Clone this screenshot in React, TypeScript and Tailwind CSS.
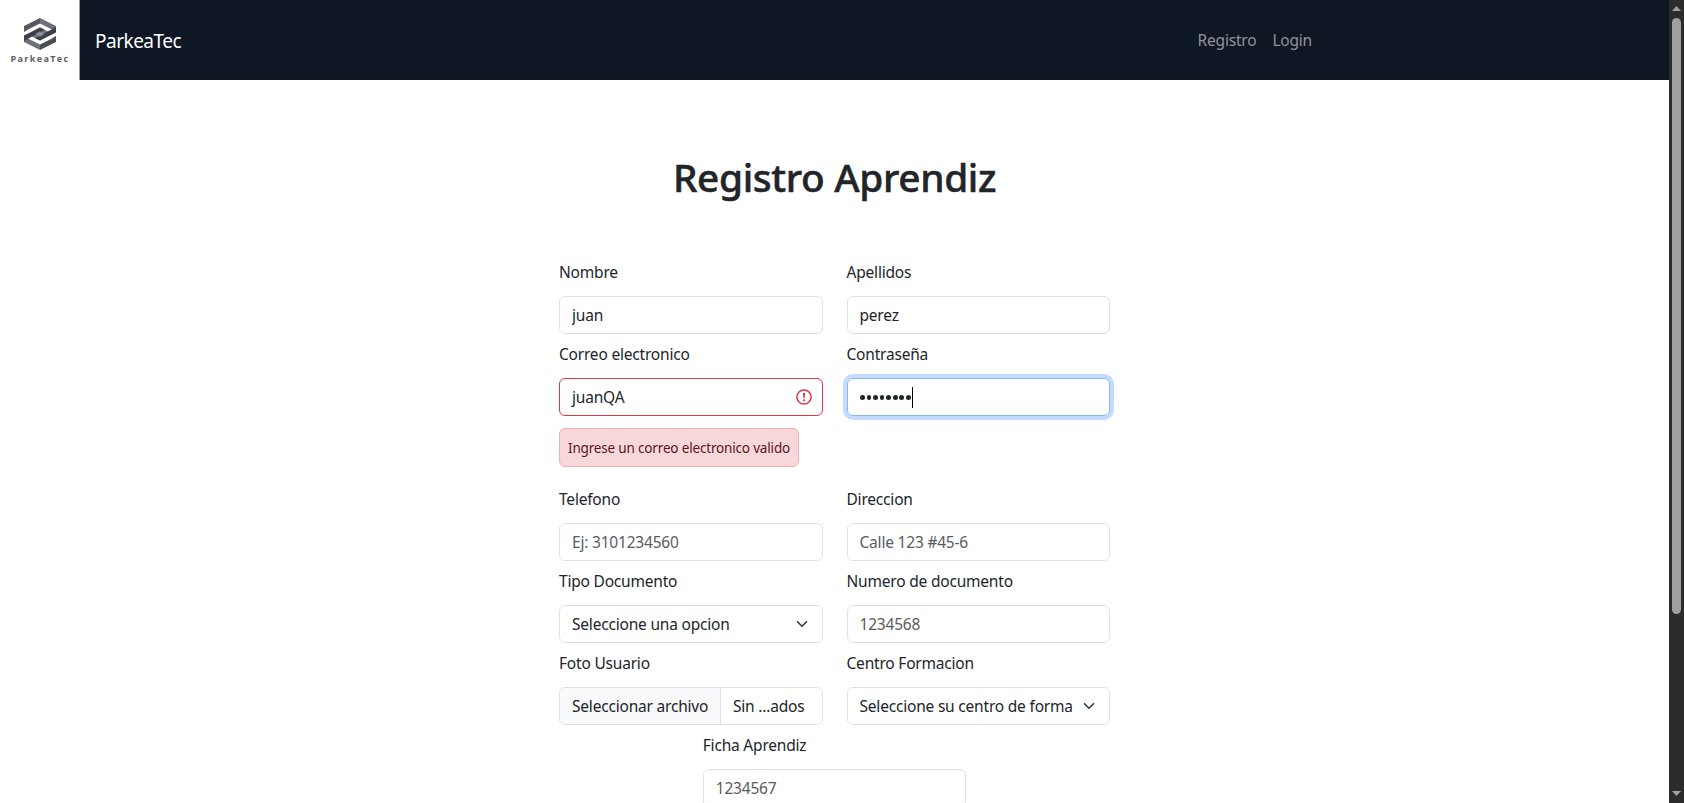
import type { ReactNode } from "react";

const box =
  "flex h-[38px] w-full items-center rounded-[6px] border border-[#dee2e6] bg-white px-3 whitespace-nowrap";

function Field({ label, children }: { label: string; children: ReactNode }) {
  return (
    <div className="flex flex-col">
      <label className="mt-2 h-6 leading-6">{label}</label>
      <div className="mt-3">{children}</div>
    </div>
  );
}

function Input({ value, placeholder }: { value?: string; placeholder?: string }) {
  return (
    <input
      className="h-[38px] w-full rounded-[6px] border border-[#dee2e6] bg-white px-3 outline-none placeholder:text-[#595c5f]"
      defaultValue={value}
      placeholder={placeholder}
    />
  );
}

function Chevron() {
  return (
    <svg className="mr-0.5 size-3 shrink-0" viewBox="0 0 16 16" fill="none" stroke="#343a40" strokeWidth="2.200" strokeLinecap="round" strokeLinejoin="round">
      <path d="m2 5 6 6 6-6" />
    </svg>
  );
}

function Logo() {
  return (
    <div className="flex h-20 w-20 shrink-0 flex-col items-center border-r border-[#9a9da3] bg-white pt-[18px]">
      <svg className="h-8 w-8" viewBox="0 0 32 32">
        <path d="M0 8 16 0v5.500L5 11 0 14z" fill="#565962" />
        <path d="M16 0 32 8v6l-5-3L16 5.500z" fill="#6e7179" />
        <path d="M0 24 16 32v-5.500L5 21 0 18z" fill="#6e7179" />
        <path d="M16 32 32 24v-6l-5 3L16 26.500z" fill="#4a4d56" />
        <path d="M16 9.500 28 15.500 22 18.500 10.500 12.500z" fill="#777a82" />
        <path d="M16 22.500 4 16.500 10 13.500 21.500 19.500z" fill="#777a82" />
        <path d="M0 17.500 16 9.500l5 2.500L4.500 20.500 0 23z" fill="#3d404a" />
        <path d="M32 14.500 16 22.500l-5-2.500L27.500 11.500 32 9z" fill="#3d404a" />
        <path d="m16 13.300 4.500 2.700-4.500 2.700-4.500-2.700z" fill="#8b8e95" />
      </svg>
      <span className="mt-[3px] pl-px font-['Open_Sans',sans-serif] text-[9px] leading-3 font-bold tracking-[1.350px] text-[#5b5e66]">
        ParkeaTec
      </span>
    </div>
  );
}

export default function App() {
  return (
    <div className="flex h-[803px] overflow-hidden bg-white font-['Noto_Sans',sans-serif] text-[15.500px] tracking-[-0.200px] text-[#212529]">
      <div className="flex flex-1 flex-col">
        <header className="flex h-20 shrink-0 items-center bg-[#0f1624]">
          <Logo />
          <span className="ml-[15px] pt-0.5 text-[19px] tracking-[-0.500px] text-white">ParkeaTec</span>
          <nav className="mr-[357px] ml-auto flex gap-4 pt-0.5 text-[#8f9399]">
            <a>Registro</a>
            <a>Login</a>
          </nav>
        </header>
        <main className="flex flex-col items-center">
          <h1 className="mt-[73px] h-12 text-[38.800px] leading-12 font-medium tracking-[-0.350px] whitespace-nowrap [-webkit-text-stroke:0.500px_#212529]">Registro Aprendiz</h1>
          <form className="mt-[51px] grid w-[551px] grid-cols-[264px_263px] gap-x-[23.500px]">
            <Field label="Nombre">
              <Input value="juan" />
            </Field>
            <Field label="Apellidos">
              <Input value="perez" />
            </Field>
            <Field label="Correo electronico">
              <div className="flex h-[38px] items-center justify-between rounded-[6px] border border-[#dc3545] pr-2.5 pl-3">
                <span className="pt-0.5">juanQA</span>
                <svg className="size-4" viewBox="0 0 16 16">
                  <circle cx="8" cy="8" r="7.100" fill="none" stroke="#dc3545" strokeWidth="1.500" />
                  <path d="M6.900 4h2.200l-.5 5.200H7.400z" fill="#dc3545" />
                  <circle cx="8" cy="11.300" r="1.100" fill="#dc3545" />
                </svg>
              </div>
              <div className="my-3 flex h-[39px] w-[240px] items-center rounded-[6px] border border-[#f1aeb5] bg-[#f8d7da] pt-0.5 pl-2 text-[13.500px] tracking-[-0.170px] whitespace-nowrap text-[#58151c]">
                Ingrese un correo electronico valido
              </div>
            </Field>
            <Field label="Contraseña">
              <div className="flex h-[38px] items-center rounded-[6px] border border-[#86b7fe] pl-[12.500px] shadow-[0_0_0_4px_#c2dbfe]">
                <div className="flex gap-[1.900px] pt-px">
                  {Array.from({ length: 8 }, (_, i) => (
                    <span key={i} className="size-[4.700px] rounded-full bg-[#212529]" />
                  ))}
                </div>
                <span className="ml-px h-[21px] w-px bg-black" />
              </div>
            </Field>
            <Field label="Telefono">
              <Input placeholder="Ej: 3101234560" />
            </Field>
            <Field label="Direccion">
              <Input placeholder="Calle 123 #45-6" />
            </Field>
            <Field label="Tipo Documento">
              <div className={`${box} justify-between`}>
                <span className="pt-0.5">Seleccione una opcion</span>
                <Chevron />
              </div>
            </Field>
            <Field label="Numero de documento">
              <Input placeholder="1234568" />
            </Field>
            <Field label="Foto Usuario">
              <div className="flex h-[38px] items-center overflow-hidden rounded-[6px] border border-[#dee2e6] whitespace-nowrap">
                <span className="flex h-full w-[161px] items-center border-r border-[#dee2e6] bg-[#f8f9fa] pt-0.5 pl-3">Seleccionar archivo</span>
                <span className="pt-0.5 pl-3">Sin ...ados</span>
              </div>
            </Field>
            <Field label="Centro Formacion">
              <div className={`${box} justify-between`}>
                <span className="pt-0.5">Seleccione su centro de forma</span>
                <Chevron />
              </div>
            </Field>
            <div className="col-span-2 w-[263px] justify-self-center">
              <Field label="Ficha Aprendiz">
                <Input placeholder="1234567" />
              </Field>
            </div>
          </form>
        </main>
      </div>
      <div className="flex w-[15px] shrink-0 flex-col items-center bg-[#2c2c2c]">
        <svg className="mt-[6px] h-[5px] w-[9px] shrink-0" viewBox="0 0 9 5">
          <path d="M0 5 4.500 0 9 5z" fill="#9f9f9f" />
        </svg>
        <div className="mt-[7px] h-[596px] w-[9px] rounded-full bg-[#9f9f9f]" />
        <svg className="mt-auto mb-[7px] h-[5px] w-[9px] shrink-0" viewBox="0 0 9 5">
          <path d="M0 0 4.500 5 9 0z" fill="#9f9f9f" />
        </svg>
      </div>
    </div>
  );
}
